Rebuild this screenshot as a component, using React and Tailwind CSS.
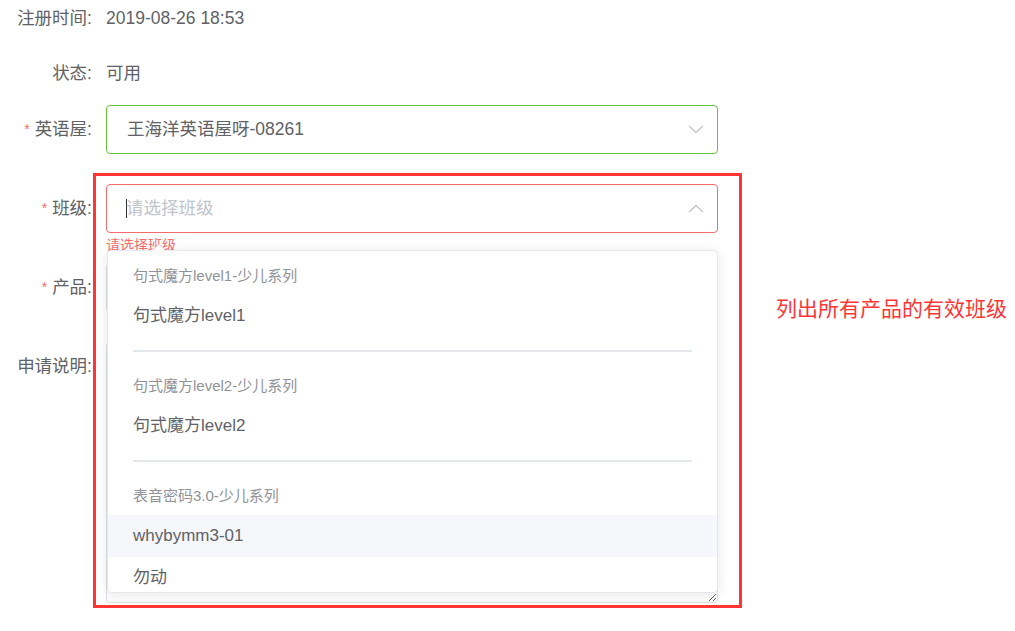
import { useState } from 'react'

const font = { fontFamily: '"Liberation Sans", "Noto Sans CJK SC", sans-serif' }

function Chevron({ up }) {
    return (
        <svg width="16" height="9" viewBox="0 0 16 9" className="shrink-0">
            <polyline
                points={up ? '1,8 8,1.5 15,8' : '1,1 8,7.5 15,1'}
                fill="none"
                stroke="#c0c4cc"
                strokeWidth="1.3"
            />
        </svg>
    )
}

function Row({ label, required, className = '', labelClass = 'items-center', children }) {
    return (
        <div className={`flex ${className}`}>
            <div className={`w-[106px] shrink-0 flex justify-end pr-[14px] text-[17.5px] text-[#606266] ${labelClass}`}>
                {required && <span className="text-[14px] text-[#f56c6c] mr-[5px]">*</span>}
                {label}
            </div>
            <div className="w-[612px] flex items-center">{children}</div>
        </div>
    )
}

const groups = [
    { title: '句式魔方level1-少儿系列', items: ['句式魔方level1'] },
    { title: '句式魔方level2-少儿系列', items: ['句式魔方level2'] },
    { title: '表音密码3.0-少儿系列', items: ['whybymm3-01', '勿动'] },
]

export default function App() {
    const [hovered] = useState('whybymm3-01')

    return (
        <div className="relative w-[1015px] h-[631px] bg-white overflow-hidden" style={font}>
            <div className="flex flex-col">
                <Row label="注册时间:" className="h-[36px]">
                    <span className="text-[17.5px] text-[#606266]">2019-08-26 18:53</span>
                </Row>
                <Row label="状态:" className="h-[36px] mt-[19px]">
                    <span className="text-[17.5px] text-[#606266]">可用</span>
                </Row>
                <Row label="英语屋:" required className="h-[49px] mt-[14px]">
                    <div className="w-full h-full border border-[#67c23a] rounded-[4px] flex items-center justify-between pl-[20px] pr-[13px]">
                        <span className="text-[17.5px] text-[#606266]">王海洋英语屋呀-08261</span>
                        <Chevron />
                    </div>
                </Row>
                <Row label="班级:" required className="h-[49px] mt-[30px] relative">
                    <div className="w-full h-full border border-[#f56c6c] rounded-[4px] flex items-center justify-between pl-[19px] pr-[13px]">
                        <div className="flex items-center">
                            <span className="w-px h-[19px] bg-[#303133] mr-[-1px]"></span>
                            <span className="text-[17.5px] text-[#c0c4cc]">请选择班级</span>
                        </div>
                        <Chevron up />
                    </div>
                    <span className="absolute left-[106px] top-[53px] text-[14px] leading-[16px] text-[#f56c6c]">请选择班级</span>
                </Row>
                <Row label="产品:" required className="h-[49px] mt-[30px]">
                    <div className="w-full h-full border border-[#dcdfe6] rounded-[4px]"></div>
                </Row>
                <Row label="申请说明:" className="mt-[30px]" labelClass="items-start leading-[48px]">
                    <textarea
                        readOnly
                        className="w-full h-[261px] border border-[#dcdfe6] rounded-[4px] outline-none resize-y"
                    ></textarea>
                </Row>
            </div>

            {/* Dropdown */}
            <div className="absolute left-[107px] top-[250px] w-[611px] h-[343px] bg-white border border-[#e4e7ed] rounded-[4px] shadow-[0_2px_12px_0_rgba(0,0,0,0.1)]">
                <div className="absolute -top-[7px] left-[44px] w-0 h-0 border-x-[7px] border-x-transparent border-b-[7px] border-b-[#e4e7ed]"></div>
                <div className="absolute -top-[6px] left-[45px] w-0 h-0 border-x-[6px] border-x-transparent border-b-[6px] border-b-white"></div>
                <div className="h-full overflow-hidden rounded-[4px] pt-[6px]">
                    {groups.map((g, gi) => (
                        <div key={g.title} className={gi < groups.length - 1 ? 'pb-[30px] relative' : ''}>
                            <div className="h-[38px] flex items-center pl-[25px] text-[15px] text-[#909399]">{g.title}</div>
                            {g.items.map(item => (
                                <div
                                    key={item}
                                    className={`h-[42px] flex items-center pl-[25px] text-[17px] text-[#606266] ${hovered === item ? 'bg-[#f5f7fa]' : ''}`}
                                >
                                    {item}
                                </div>
                            ))}
                            {gi < groups.length - 1 && (
                                <div className="absolute left-[25px] right-[25px] bottom-[15px] h-[2px] bg-[#e4e7ed]"></div>
                            )}
                        </div>
                    ))}
                </div>
            </div>

            {/* Annotation */}
            <div className="absolute left-[93px] top-[173px] w-[649px] h-[435px] border-[3px] border-[#fe3535] pointer-events-none"></div>
            <div className="absolute left-[776px] top-[296px] text-[21px] leading-[26px] text-[#fe3535]">列出所有产品的有效班级</div>
        </div>
    )
}
